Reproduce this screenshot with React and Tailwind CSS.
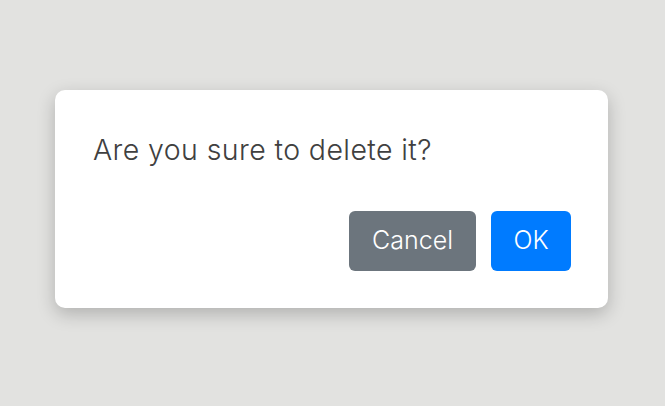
import React from 'react';

const App = () => {
  return (
    <div
      className="w-[665px] h-[406px] bg-[#e2e2e0] flex items-center justify-center pb-[8px] pr-[2px]"
      style={{ fontFamily: 'Inter, "Noto Sans", sans-serif' }}
    >
      <div className="w-[553px] h-[218px] bg-white rounded-[10px] shadow-[0_6px_18px_rgba(0,0,0,0.22)] pl-[38px] pr-[37px] pt-[42px] pb-[37px] flex flex-col justify-between">
        <p className="text-[28.5px] leading-[36px] tracking-[0.4px] text-[#404040] font-light">Are you sure to delete it?</p>
        <div className="flex justify-end gap-[15px]">
          <button className="w-[127px] h-[60px] rounded-[6px] bg-[#6c757d] text-white text-[25px] font-light">
            Cancel
          </button>
          <button className="w-[80px] h-[60px] rounded-[6px] bg-[#007bff] text-white text-[25px] font-light">
            OK
          </button>
        </div>
      </div>
    </div>
  );
};

export default App;
